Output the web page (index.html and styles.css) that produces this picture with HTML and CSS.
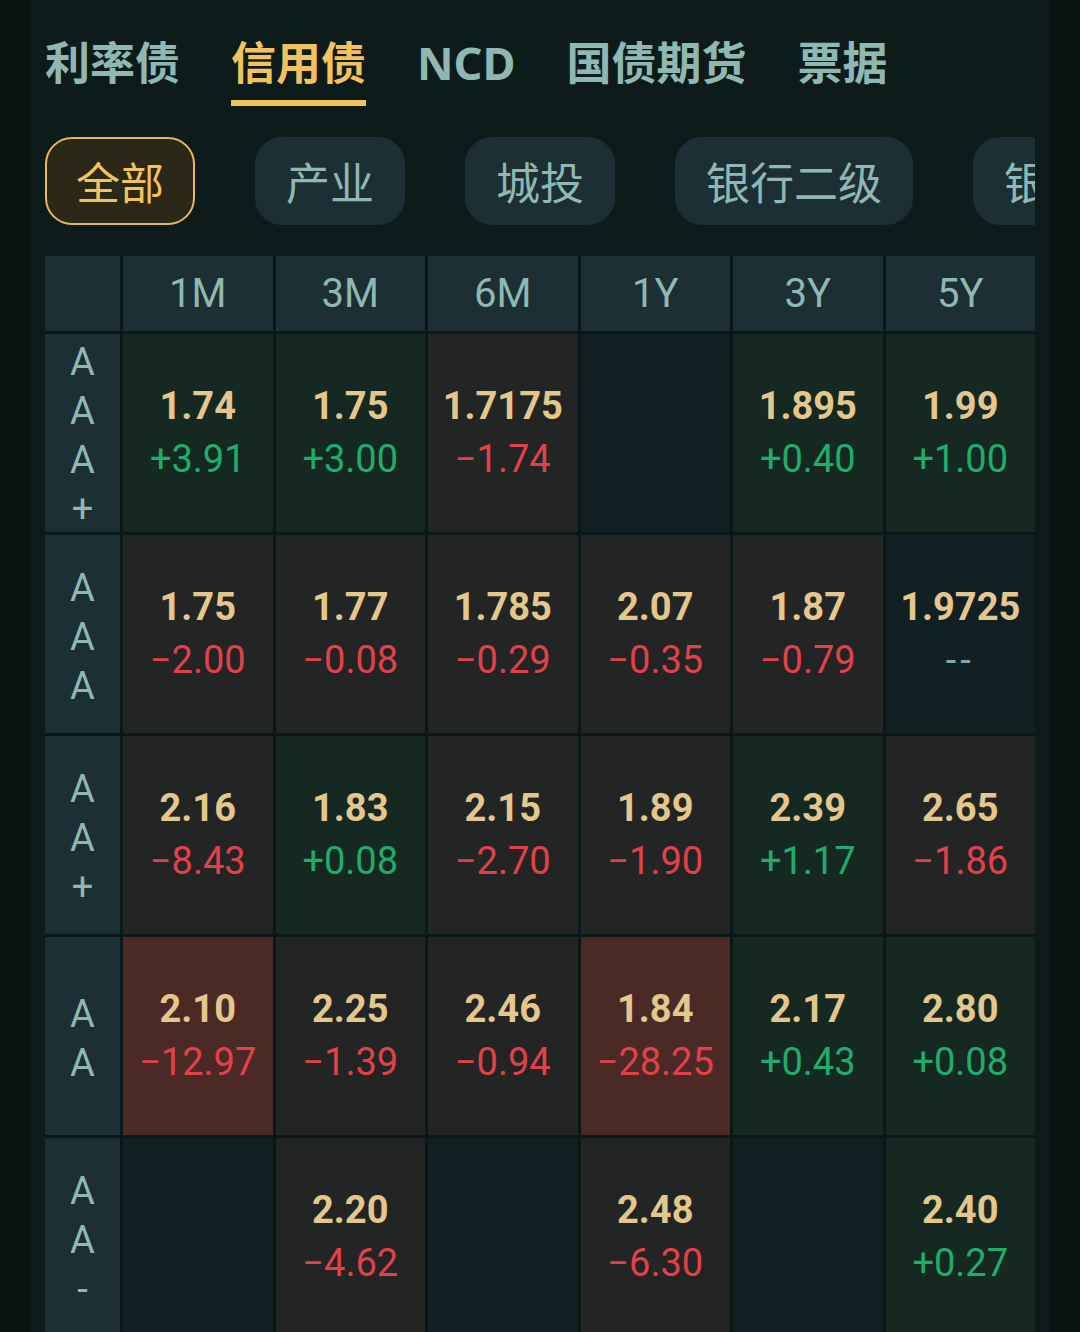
FILE: index.html
```html
<!DOCTYPE html>
<html lang="zh-CN">
  <head>
    <meta charset="UTF-8" />
    <meta name="viewport" content="width=device-width, initial-scale=1.0" />
    <title>信用债</title>
    <link rel="stylesheet" href="styles.css">
  </head>
  <body>
    <div class="panel">
      <!-- Market tabs -->
      <div class="tabs">
        <div class="tab">利率债</div>
        <div class="tab active">信用债</div>
        <div class="tab">NCD</div>
        <div class="tab">国债期货</div>
        <div class="tab">票据</div>
      </div>

      <!-- Bond type filter -->
      <div class="chips">
        <div class="chip active">全部</div>
        <div class="chip">产业</div>
        <div class="chip">城投</div>
        <div class="chip">银行二级</div>
        <div class="chip">银行永续</div>
      </div>

      <!-- Yield grid -->
      <div class="grid">
        <div class="head"></div>
        <div class="head">1M</div>
        <div class="head">3M</div>
        <div class="head">6M</div>
        <div class="head">1Y</div>
        <div class="head">3Y</div>
        <div class="head">5Y</div>

        <div class="rating"><span>AAA+</span></div>
        <div class="cell up"><b>1.74</b><i>+3.91</i></div>
        <div class="cell up"><b>1.75</b><i>+3.00</i></div>
        <div class="cell down"><b>1.7175</b><i>−1.74</i></div>
        <div class="cell empty"></div>
        <div class="cell up"><b>1.895</b><i>+0.40</i></div>
        <div class="cell up"><b>1.99</b><i>+1.00</i></div>

        <div class="rating"><span>AAA</span></div>
        <div class="cell down"><b>1.75</b><i>−2.00</i></div>
        <div class="cell down"><b>1.77</b><i>−0.08</i></div>
        <div class="cell down"><b>1.785</b><i>−0.29</i></div>
        <div class="cell down"><b>2.07</b><i>−0.35</i></div>
        <div class="cell down"><b>1.87</b><i>−0.79</i></div>
        <div class="cell empty"><b>1.9725</b><i class="none">--</i></div>

        <div class="rating"><span>AA+</span></div>
        <div class="cell down"><b>2.16</b><i>−8.43</i></div>
        <div class="cell up"><b>1.83</b><i>+0.08</i></div>
        <div class="cell down"><b>2.15</b><i>−2.70</i></div>
        <div class="cell down"><b>1.89</b><i>−1.90</i></div>
        <div class="cell up"><b>2.39</b><i>+1.17</i></div>
        <div class="cell down"><b>2.65</b><i>−1.86</i></div>

        <div class="rating"><span>AA</span></div>
        <div class="cell down hot"><b>2.10</b><i>−12.97</i></div>
        <div class="cell down"><b>2.25</b><i>−1.39</i></div>
        <div class="cell down"><b>2.46</b><i>−0.94</i></div>
        <div class="cell down hot"><b>1.84</b><i>−28.25</i></div>
        <div class="cell up"><b>2.17</b><i>+0.43</i></div>
        <div class="cell up"><b>2.80</b><i>+0.08</i></div>

        <div class="rating"><span>AA-</span></div>
        <div class="cell empty"></div>
        <div class="cell down"><b>2.20</b><i>−4.62</i></div>
        <div class="cell empty"></div>
        <div class="cell down"><b>2.48</b><i>−6.30</i></div>
        <div class="cell empty"></div>
        <div class="cell up"><b>2.40</b><i>+0.27</i></div>
      </div>
    </div>
  </body>
</html>
```

FILE: styles.css
```css
html,
body {
  margin: 0;
  height: 100%;
  overflow: hidden;
}
body {
  background-color: #081312;
  font-family: Roboto, "Noto Sans CJK SC", sans-serif;
}
.panel {
  width: 990px;
  min-height: 100%;
  margin-left: 30px;
  padding: 0 15px;
  background-color: #0e1b1b;
}

/* tabs */
.tabs {
  display: flex;
  gap: 51px;
  padding-top: 40px;
}
.tab {
  font-family: "Noto Sans", "Noto Sans CJK SC", sans-serif;
  font-size: 45px;
  font-weight: 700;
  line-height: 45px;
  color: #8fb8b2;
  padding-bottom: 15px;
  border-bottom: 6px solid transparent;
}
.tab.active {
  color: #f2c25e;
  border-bottom-color: #f2c25e;
}

/* chips */
.chips {
  display: flex;
  gap: 60px;
  margin-top: 31px;
  overflow: hidden;
}
.chip {
  flex: none;
  height: 84px;
  padding: 0 29px;
  display: flex;
  align-items: center;
  font-family: "Noto Sans CJK SC", sans-serif;
  font-size: 44px;
  color: #8fb8b2;
  background-color: #1c2f35;
  border: 2px solid #1c2f35;
  border-radius: 27px;
}
.chip.active {
  color: #f2c25e;
  background-color: #2b2818;
  border-color: #e6b95a;
}

/* grid */
.grid {
  display: grid;
  grid-template-columns: 75px repeat(6, 1fr);
  grid-template-rows: 75px;
  grid-auto-rows: 198px;
  gap: 3px;
  margin-top: 31px;
  background-color: #0b1818;
}
.head {
  display: flex;
  align-items: center;
  justify-content: center;
  background-color: #1c2f35;
  color: #8fb8b2;
  font-size: 40px;
}
.rating {
  display: flex;
  align-items: center;
  justify-content: center;
  background-color: #1c2f35;
  color: #8fb8b2;
  font-size: 38px;
  line-height: 49px;
}
.rating span {
  width: 28px;
  padding-top: 6px;
  text-align: center;
  word-break: break-all;
}
.cell {
  display: flex;
  flex-direction: column;
  align-items: center;
  justify-content: center;
  font-size: 38px;
  line-height: 53px;
}
.cell b {
  color: #e4c78c;
  font-weight: 700;
}
.cell i {
  font-style: normal;
}
.cell.up {
  background-color: #152922;
}
.cell.up i {
  color: #1fae6a;
}
.cell.down {
  background-color: #232424;
}
.cell.down i {
  color: #e3414a;
}
.cell.hot {
  background-color: #4b2a26;
}
.cell.empty {
  background-color: #122023;
}
.cell i.none {
  color: #7fa6a8;
  letter-spacing: 4px;
}
```
